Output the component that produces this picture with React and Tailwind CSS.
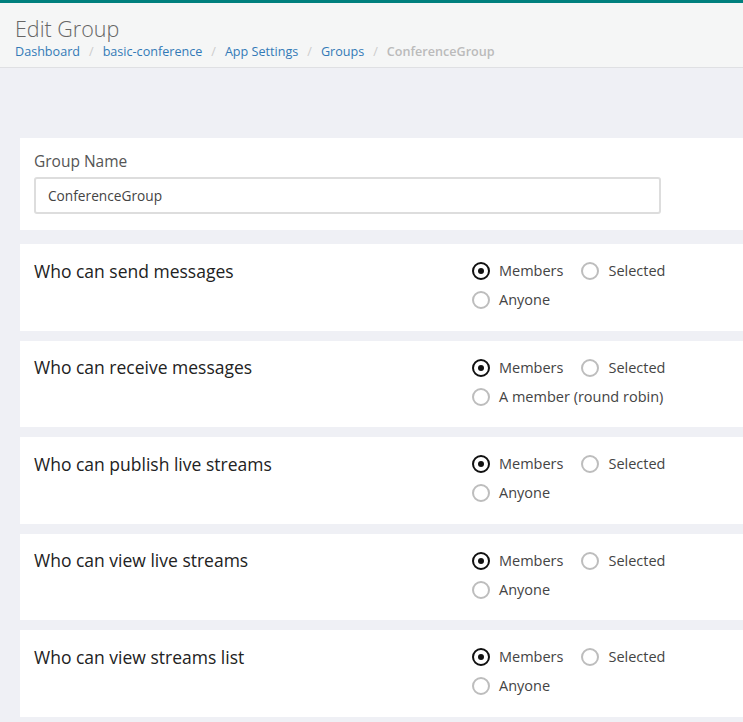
import React, { useState } from 'react';

const crumbs = ['Dashboard', 'basic-conference', 'App Settings', 'Groups'];

const settings = [
  { title: 'Who can send messages', extra: 'Anyone' },
  { title: 'Who can receive messages', extra: 'A member (round robin)' },
  { title: 'Who can publish live streams', extra: 'Anyone' },
  { title: 'Who can view live streams', extra: 'Anyone' },
  { title: 'Who can view streams list', extra: 'Anyone' },
];

const Radio = ({ checked, label, onClick }) => (
  <button onClick={onClick} className="flex items-center gap-[9px] h-5 text-[14.5px] text-[#444]">
    <span
      className={`w-[18px] h-[18px] rounded-full border-2 flex items-center justify-center ${
        checked ? 'border-[#111]' : 'border-[#bdbdbd]'
      }`}
    >
      {checked && <span className="w-[6px] h-[6px] rounded-full bg-[#111]" />}
    </span>
    {label}
  </button>
);

const SettingCard = ({ title, extra }) => {
  const [value, setValue] = useState('Members');
  return (
    <div className="w-[760px] bg-white flex pl-[14px] pt-[17px] pb-[20.5px]">
      <div className="w-[438px] h-5 flex items-center text-[17.5px] text-[#222]">{title}</div>
      <div className="flex flex-col gap-[9px]">
        <div className="flex gap-[18px]">
          <Radio checked={value === 'Members'} label="Members" onClick={() => setValue('Members')} />
          <Radio checked={value === 'Selected'} label="Selected" onClick={() => setValue('Selected')} />
        </div>
        <Radio checked={value === extra} label={extra} onClick={() => setValue(extra)} />
      </div>
    </div>
  );
};

export default function App() {
  const [name, setName] = useState('ConferenceGroup');

  return (
    <div className="min-h-[722px] w-[743px] overflow-hidden bg-[#eff0f5]" style={{ fontFamily: '"Open Sans", sans-serif' }}>
      <div className="h-[3px] bg-[#00807e]" />
      <div className="bg-[#f5f6f6] border-b border-[#dfe0e3] pl-[15px] pt-[13px] h-[65px]">
        <h1 className="text-[21.5px] font-light text-[#666] leading-[26px]">Edit Group</h1>
        <div className="flex items-center text-[12.6px] leading-[20px] mt-0">
          {crumbs.map((c) => (
            <React.Fragment key={c}>
              <a className="text-[#337ab7]">{c}</a>
              <span className="text-[#ccc] px-[9px]">/</span>
            </React.Fragment>
          ))}
          <span className="text-[#bbb] font-semibold">ConferenceGroup</span>
        </div>
      </div>

      <div className="pl-5 pt-[70px] flex flex-col">
        <div className="w-[760px] bg-white pl-[14px] pt-[13px] pb-[16px]">
          <label className="block text-[15.5px] text-[#555] leading-5 mb-[6px]">Group Name</label>
          <input
            value={name}
            onChange={(e) => setName(e.target.value)}
            className="w-[627px] h-[37px] border-2 border-[#ddd] rounded-[3px] px-3 text-[13.7px] text-[#444] outline-none"
          />
        </div>
        <div className="flex flex-col gap-[10px] mt-[14px]">
          {settings.map((s) => (
            <SettingCard key={s.title} {...s} />
          ))}
        </div>
      </div>
    </div>
  );
}
